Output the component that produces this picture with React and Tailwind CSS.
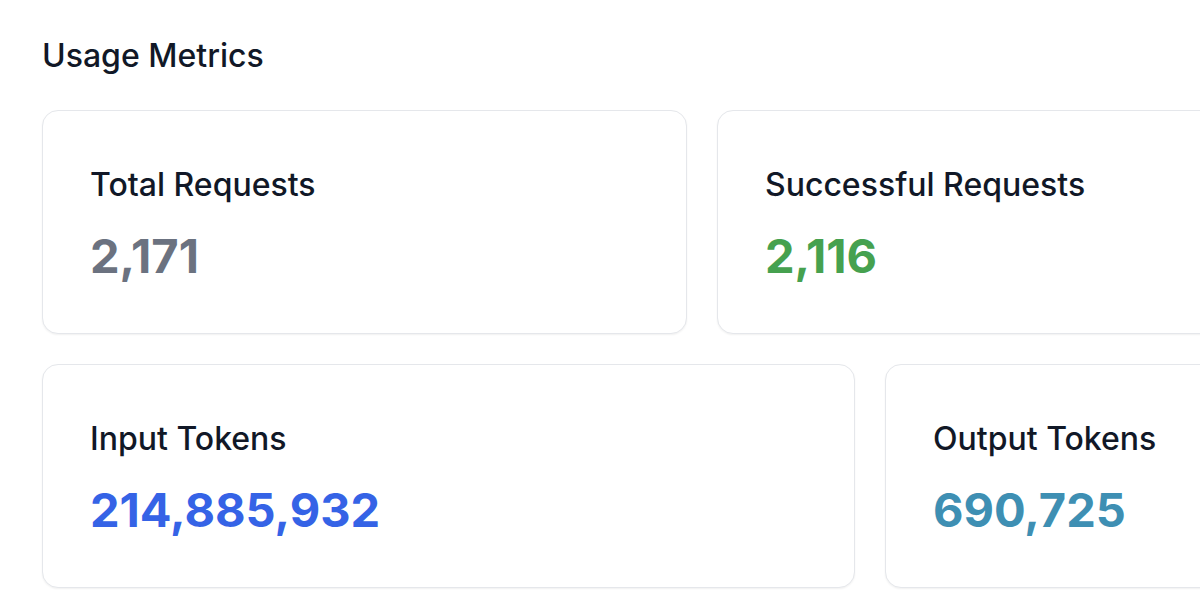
import React from "react";

const rows = [
  [
    { label: "Total Requests", value: "2,171", color: "text-[#6b7280]", width: "w-[645px]" },
    { label: "Successful Requests", value: "2,116", color: "text-[#46a14f]", width: "w-[645px]" },
  ],
  [
    { label: "Input Tokens", value: "214,885,932", color: "text-[#3563e6]", width: "w-[813px]" },
    { label: "Output Tokens", value: "690,725", color: "text-[#3e8fb3]", width: "w-[645px]" },
  ],
];

function MetricCard({ label, value, color, width }) {
  return (
    <div
      className={`${width} shrink-0 rounded-2xl border border-[#e5e7eb] bg-white px-[47px] pt-[50px] pb-[47px] shadow-[0_1px_2px_rgba(0,0,0,0.06)]`}
    >
      <p className="text-[32px] leading-[48px] font-medium text-[#111827]">{label}</p>
      <p className={`mt-[17px] text-[47px] leading-[60px] font-bold ${color}`}>{value}</p>
    </div>
  );
}

export default function App() {
  return (
    <div
      className="min-h-screen overflow-hidden bg-white pl-[42px] pt-[32px]"
      style={{ fontFamily: "Inter, 'Noto Sans', sans-serif" }}
    >
      <h2 className="text-[32px] leading-[48px] font-medium text-[#111827]">Usage Metrics</h2>
      <div className="mt-[30px] flex flex-col gap-[30px]">
        {rows.map((row, i) => (
          <div key={i} className="flex gap-[30px]">
            {row.map((m) => (
              <MetricCard key={m.label} {...m} />
            ))}
          </div>
        ))}
      </div>
    </div>
  );
}
